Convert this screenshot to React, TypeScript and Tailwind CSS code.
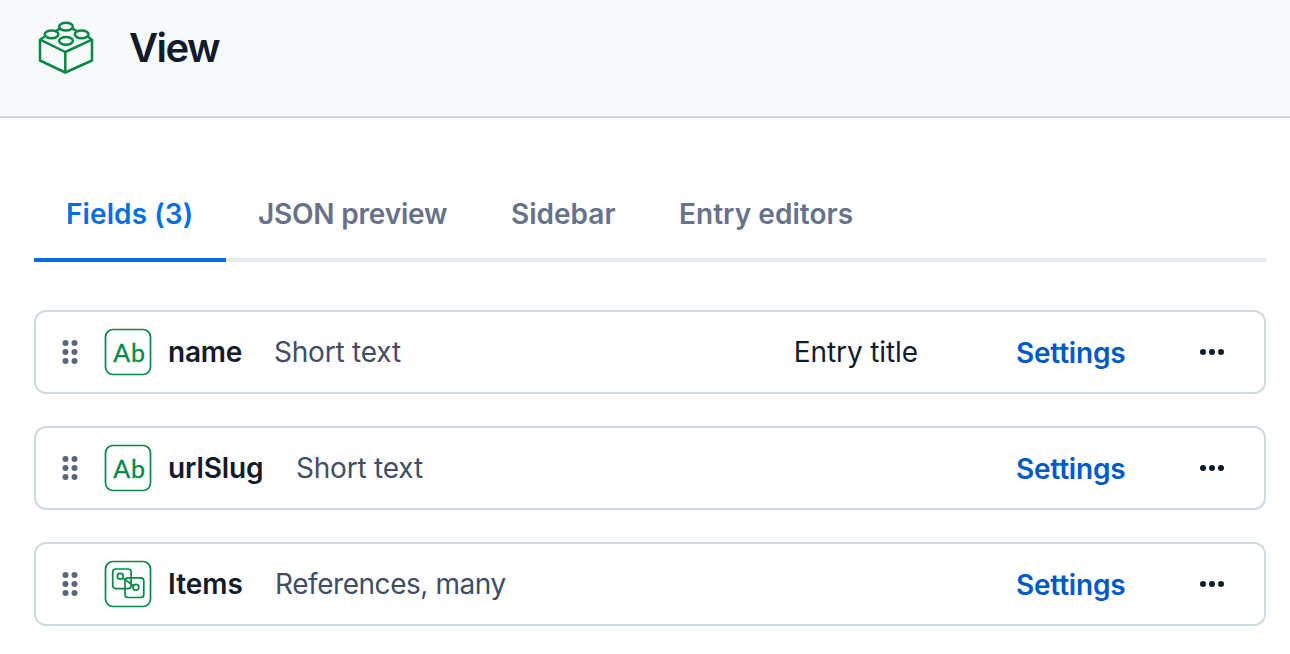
import React from "react";

type Field = {
  name: string;
  nameClass: string;
  type: string;
  typeClass: string;
  kind: "text" | "reference";
  isTitle?: boolean;
};

const fields: Field[] = [
  { name: "name", nameClass: "w-[106px] tracking-[-0.2px]", type: "Short text", typeClass: "tracking-[-0.2px]", kind: "text", isTitle: true },
  { name: "urlSlug", nameClass: "w-[128px] tracking-[-0.1px]", type: "Short text", typeClass: "tracking-[-0.2px]", kind: "text" },
  { name: "Items", nameClass: "w-[107px] tracking-[0px]", type: "References, many", typeClass: "tracking-[-0.45px]", kind: "reference" },
];

const tabs = [
  { label: "Fields (3)", className: "w-[192px] tracking-[0.1px] text-[#036fe3]", active: true },
  { label: "JSON preview", className: "w-[253px] tracking-[-0.2px] text-[#67728a]" },
  { label: "Sidebar", className: "w-[168px] tracking-[0px] text-[#67728a]" },
  { label: "Entry editors", className: "w-[240px] tracking-[0.05px] text-[#67728a]" },
];

function BrickIcon() {
  return (
    <svg className="h-[56px] w-[58px] shrink-0" viewBox="0 0 58 56" fill="none" stroke="#078844" strokeWidth="2.5">
      <path d="M8.5 17.8 L4 20.7 V41.5 L29.3 53.5 L56 41.5 V20.7 L52 17.8 M4 20.7 L29.3 33 L56 20.7 M29.3 33 V53.5 M19.5 12.3 L24 9.6 M36.5 9.6 L41 12.3" strokeLinejoin="round" />
      <ellipse cx="30" cy="7.6" rx="6.9" ry="3.9" />
      <ellipse cx="15.6" cy="15.3" rx="6.9" ry="3.9" />
      <ellipse cx="45.6" cy="15.3" rx="6.9" ry="3.9" />
      <ellipse cx="30" cy="21.8" rx="6.9" ry="3.9" />
    </svg>
  );
}

function ReferenceIcon() {
  return (
    <svg className="absolute inset-0 size-12" viewBox="0 0 48 48" fill="none" stroke="#078844" strokeWidth="1.7">
      <rect x="8.7" y="9" width="18.4" height="19.6" rx="3" />
      <rect x="21" y="17.9" width="18.8" height="19.6" rx="3" />
      <circle cx="16.3" cy="16.3" r="2.9" />
      <circle cx="31.9" cy="27.3" r="2.9" />
      <path d="M18.7 18 L29.5 25.6" />
    </svg>
  );
}

function DragHandle() {
  return (
    <svg className="h-[26px] w-[18px] shrink-0" viewBox="0 0 18 26" fill="#5a657c">
      {[4, 13, 22].map((y) => (
        <React.Fragment key={y}>
          <circle cx="4.5" cy={y} r="3" />
          <circle cx="13.5" cy={y} r="3" />
        </React.Fragment>
      ))}
    </svg>
  );
}

function FieldRow({ field }: { field: Field }) {
  return (
    <li className="flex h-[84px] items-center rounded-xl border-2 border-[#cfd9e0] pl-[25px] pr-[39px]">
      <DragHandle />
      <div className="relative ml-[25px] flex size-12 shrink-0 items-center justify-center">
        <svg className="absolute inset-0 size-12" viewBox="0 0 48 48" fill="none" stroke="#078844" strokeWidth="1.7">
          <rect x="1.5" y="1.5" width="45" height="45" rx="7.5" />
        </svg>
        {field.kind === "text" ? (
          <span className="ml-[3px] font-['Lato',sans-serif] text-[25px] leading-none tracking-[0.8px] text-[#078844] [-webkit-text-stroke:0.3px_#078844]">Ab</span>
        ) : (
          <ReferenceIcon />
        )}
      </div>
      <span className={`ml-4 shrink-0 font-semibold text-[#111b2b] ${field.nameClass}`}>{field.name}</span>
      <span className={`grow whitespace-nowrap text-[#414d63] ${field.typeClass}`}>{field.type}</span>
      {field.isTitle && <span className="mr-[98px] shrink-0 tracking-[-0.1px] text-[#111b2b]">Entry title</span>}
      <button className="mt-0.5 w-[183px] shrink-0 text-left font-semibold tracking-[-0.2px] text-[#0059c8]">Settings</button>
      <svg className="h-2 w-[26px] shrink-0" viewBox="0 0 26 8" fill="#111b2b" aria-label="Actions">
        <circle cx="4" cy="4" r="3" />
        <circle cx="13" cy="4" r="3" />
        <circle cx="22" cy="4" r="3" />
      </svg>
    </li>
  );
}

export default function App() {
  return (
    <div className="h-[654px] w-[1290px] overflow-hidden bg-white font-['Inter',sans-serif] text-[28px] leading-[40px]">
      <header className="flex h-[118px] items-start border-b-2 border-[#cfd9e0] bg-[#f7f9fb] pl-[36px] pt-[19px]">
        <BrickIcon />
        <h1 className="ml-[35px] mt-[5px] text-[40px] font-semibold leading-[48px] tracking-[-1.5px] text-[#111b2b]">View</h1>
      </header>
      <main className="pl-[34px] pr-6 pt-[48px]">
        <nav className="flex h-[96px] border-b-4 border-[#e7ebee]">
          {tabs.map((tab) => (
            <button
              key={tab.label}
              className={`-mb-1 h-[96px] shrink-0 whitespace-nowrap border-b-4 pl-8 pt-1 text-left font-semibold ${tab.active ? "border-[#036fe3]" : "border-transparent"} ${tab.className}`}
            >
              {tab.label}
            </button>
          ))}
        </nav>
        <ul className="mt-12 flex flex-col gap-8">
          {fields.map((field) => (
            <FieldRow key={field.name} field={field} />
          ))}
        </ul>
      </main>
    </div>
  );
}
